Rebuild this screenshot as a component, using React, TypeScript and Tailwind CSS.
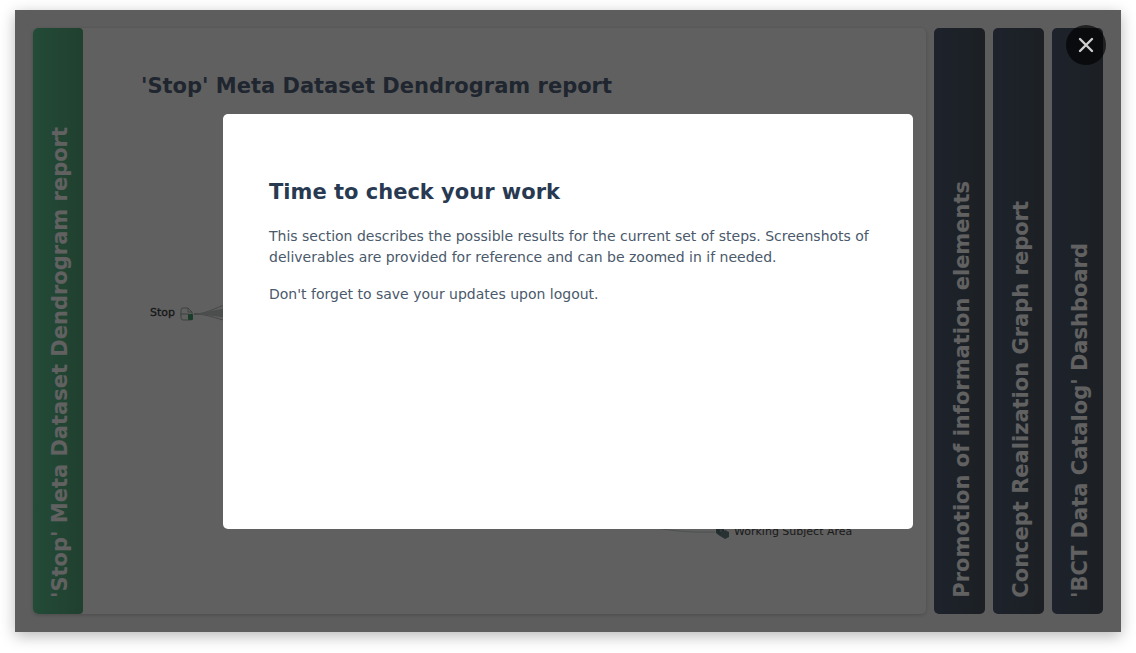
import React from "react";

const collapsedTabs = [
  "Promotion of information elements",
  "Concept Realization Graph report",
  "'BCT Data Catalog' Dashboard",
];

function TabLabel({ children }: { children: React.ReactNode }) {
  return (
    <span className="rotate-180 whitespace-nowrap text-[21px] font-bold leading-6 text-white [writing-mode:vertical-rl]">
      {children}
    </span>
  );
}

function Dendrogram() {
  return (
    <svg className="mt-[10px] min-h-0 w-full flex-1" role="img" aria-label="Stop dendrogram">
      <g fill="none" stroke="#b4b9b9" strokeWidth="1">
        <path d="M111 204C123 204 132 198 144 194" />
        <path d="M111 204C123 204 132 201 144 199" />
        <path d="M111 204C123 204 132 204 144 204" />
        <path d="M111 204C123 204 132 208 144 211" />
      </g>
      <path d="M112 204C123 202 132 200 144 198V208C132 206 123 205 112 204Z" fill="#c8cccc" />
      <path d="M560 416C584 420 604 423 632 422" fill="none" stroke="#c6d4cf" strokeWidth="1" />
      <path
        d="M98 200q0-2 2-2h5l4 4v7q0 1-1 1h-8q-2 0-2-2zM97 204h9M105 198v4h4"
        fill="none"
        stroke="#a0afaa"
        strokeWidth="1"
      />
      <rect x="105" y="204" width="5" height="6" rx="1" fill="#42a06f" />
      <text x="67" y="206" fill="#404040" stroke="#404040" strokeWidth="0.3" fontSize="11">
        Stop
      </text>
      <path d="M633 416l4-2 4 2v8l-4 2-4-3z" fill="#5d7677" />
      <path d="M638 423l4-3 4 2v5l-4 2-5-3z" fill="#6c8587" />
      <path d="M638 416v6" stroke="#b1c2bd" />
      <text x="651" y="425" fill="#484848" fontSize="11">
        Working Subject Area
      </text>
    </svg>
  );
}

export default function App() {
  return (
    <main className="flex min-h-screen bg-white px-[15px] pt-[10px] pb-[21px] font-['DejaVu_Sans',Verdana,sans-serif]">
      <div className="relative flex w-full bg-[#f5f5f5] shadow-[0_4px_14px_rgba(0,0,0,0.28)]">
        <div className="flex min-w-0 flex-1 gap-2 p-[18px]">
          <section className="flex min-w-0 flex-1 overflow-hidden rounded-[5px] bg-[#fdfdfd] shadow-[0_1px_4px_rgba(0,0,0,0.2)]">
            <button
              type="button"
              aria-expanded="true"
              className="flex w-[50px] shrink-0 items-end justify-center rounded-[5px] rounded-r-sm bg-linear-to-r from-[#5cc592] to-[#57a87c] pb-4 pl-1"
            >
              <TabLabel>'Stop' Meta Dataset Dendrogram report</TabLabel>
            </button>
            <div className="flex min-w-0 flex-1 flex-col pt-11">
              <h1 className="pl-[58px] text-[21px] font-bold leading-7 text-[#53647c]">
                'Stop' Meta Dataset Dendrogram report
              </h1>
              <Dendrogram />
            </div>
          </section>
          {collapsedTabs.map((label) => (
            <button
              key={label}
              type="button"
              aria-expanded="false"
              className="flex w-[51px] shrink-0 items-end justify-center rounded-[5px] bg-linear-to-r from-[#4d5b74] to-[#4a555f] pb-4 pl-1"
            >
              <TabLabel>{label}</TabLabel>
            </button>
          ))}
        </div>
        <div className="absolute inset-0 flex items-center justify-center bg-black/62">
          <div
            role="dialog"
            aria-modal="true"
            aria-labelledby="dialog-title"
            className="min-h-[415px] w-full max-w-[690px] rounded-[5px] bg-white pr-10 pl-[46px] pt-16 pb-12 text-[#4a596b]"
          >
            <h2 id="dialog-title" className="text-[21px] font-bold leading-7 text-[#283a52]">
              Time to check your work
            </h2>
            <p className="mt-5 text-sm leading-[21px]">
              This section describes the possible results for the current set of steps. Screenshots
              of deliverables are provided for reference and can be zoomed in if needed.
            </p>
            <p className="mt-4 text-sm leading-[21px]">
              Don't forget to save your updates upon logout.
            </p>
          </div>
          <button
            type="button"
            aria-label="Close"
            className="absolute top-[15px] right-[15px] flex size-10 items-center justify-center rounded-full bg-black/65 text-[#cfcfcf]"
          >
            <svg className="size-4" viewBox="0 0 16 16" fill="none" aria-hidden="true">
              <path d="M2 2l12 12M14 2L2 14" stroke="currentColor" strokeWidth="2.4" strokeLinecap="round" />
            </svg>
          </button>
        </div>
      </div>
    </main>
  );
}
